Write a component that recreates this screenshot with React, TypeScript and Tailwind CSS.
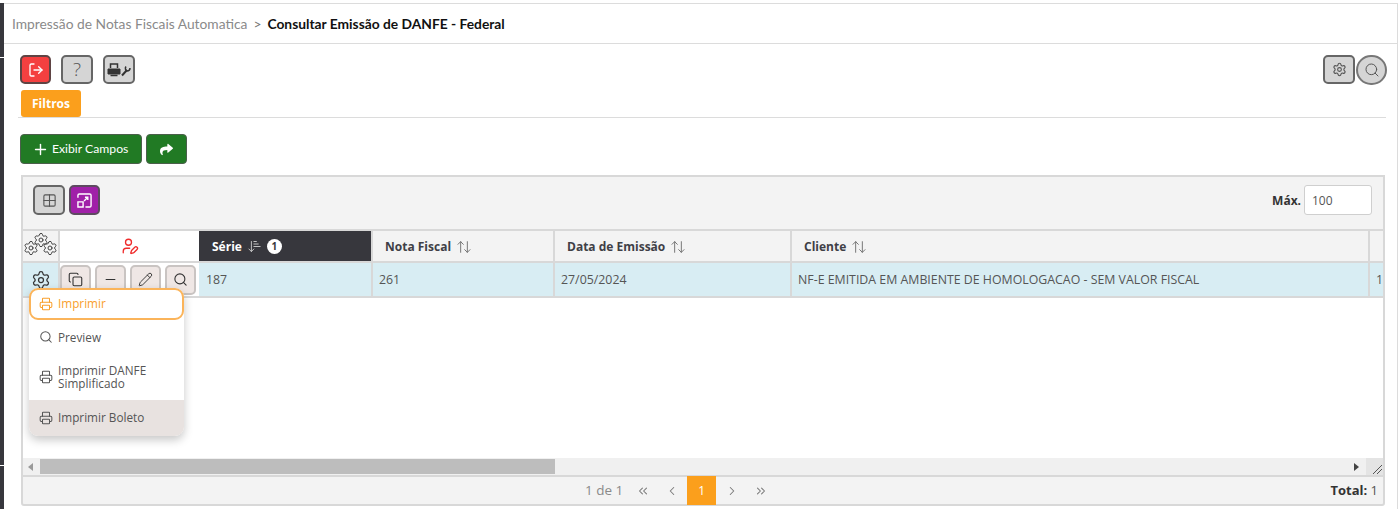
import {
  ArrowDownNarrowWide,
  ArrowUpDown,
  ChevronLeft,
  ChevronRight,
  ChevronsLeft,
  ChevronsRight,
  Copy,
  Grid2x2,
  LogOut,
  Minus,
  Pencil,
  Plus,
  Printer,
  Search,
  Settings,
  UserPen,
} from "lucide-react";
import { FaShare } from "react-icons/fa";

const columns = "grid grid-cols-[37px_139px_174px_182px_237px_578px_13px]";

function GrayButton({ className, children }: { className: string; children: React.ReactNode }) {
  return (
    <button
      type="button"
      className={`flex items-center justify-center rounded-[5px] border-2 border-[#666] bg-[#d5d5d5] text-[#555] ${className}`}
    >
      {children}
    </button>
  );
}

function HeaderCell({ label }: { label: string }) {
  return (
    <div className="flex items-center gap-[5px] border-r-2 border-[#d8d8d8] pt-[1px] pl-[12px] text-[12px] font-bold text-[#3f3f46]">
      {label}
      <ArrowUpDown className="h-4 w-4 text-[#777]" strokeWidth={1.5} />
    </div>
  );
}

function RowAction({ children }: { children: React.ReactNode }) {
  return (
    <button
      type="button"
      className="flex h-[30px] w-[31px] items-center justify-center rounded-[5px] border-2 border-[#c9c4c2] bg-[#efe7e5] text-[#333]"
    >
      {children}
    </button>
  );
}

function MenuItem({ label, icon, height }: { label: React.ReactNode; icon: React.ReactNode; height: string }) {
  return (
    <div className={`flex items-center gap-[5px] pl-[10px] text-[11.75px] leading-[13px] text-[#555] ${height}`}>
      {icon}
      <span>{label}</span>
    </div>
  );
}

export default function App() {
  return (
    <div className="flex h-[509px] w-[1399px] overflow-hidden bg-white font-['Open_Sans',sans-serif]">
      <div className="mt-[3px] flex w-[4px] flex-col">
        <div className="h-[54px] bg-[#37373d]" />
        <div className="mt-[1px] h-[407px] bg-[#37373d]" />
        <div className="mt-[1px] flex-1 bg-[#37373d]" />
      </div>
      <div className="mt-[3px] mr-[1px] flex flex-1 flex-col border-t border-r border-[#dcdcdc]">
        <header className="flex h-[40px] shrink-0 items-center gap-[6px] border-b border-[#dcdcdc] pt-[2px] pl-[8px] font-['Lato',sans-serif] text-[13.8px]">
          <span className="text-[#8a8a8a]">Impressão de Notas Fiscais Automatica</span>
          <span className="text-[#777]">&gt;</span>
          <span className="font-bold text-[#111]">Consultar Emissão de DANFE - Federal</span>
        </header>

        <div className="mt-[11px] flex pr-[10px] pl-[16px]">
          <GrayButton className="h-[29px] w-[31px] !border-[#5f4444] !bg-[#f44040] !text-white">
            <LogOut className="h-4 w-4" />
          </GrayButton>
          <GrayButton className="ml-[10px] h-[29px] w-[32px] text-[19px] font-light !text-[#555]">?</GrayButton>
          <GrayButton className="ml-[10px] h-[29px] w-[32px]">
            <svg viewBox="0 0 24 14" className="h-[14px] w-[24px] text-[#333]" fill="none" stroke="currentColor">
              <path d="M3.5 5V1h7v4" strokeWidth="1.5" />
              <path d="M1 6h12v5H1z" fill="currentColor" strokeWidth="1" />
              <path d="M3.5 12.5h7" strokeWidth="1.5" />
              <path d="M15 12.5 20 7" strokeWidth="2" />
              <path d="M19 3.5A3 3 0 0 0 20 8a3 3 0 0 0 3-3" strokeWidth="1.5" />
            </svg>
          </GrayButton>
          <GrayButton className="ml-auto h-[29px] w-[32px]">
            <Settings className="h-[15px] w-[15px]" strokeWidth={1.75} />
          </GrayButton>
          <GrayButton className="ml-[1px] h-[30px] w-[31px] !rounded-full !border-[#777]">
            <Search className="h-4 w-4" strokeWidth={1.5} />
          </GrayButton>
        </div>

        <div className="mt-[5px] mr-[11px] ml-[14px] border-b border-[#dcdcdc] pl-[3px]">
          <div className="flex h-[27px] w-[60px] items-center justify-center rounded-[3px] bg-[#fb9f1c] text-[12px] font-bold text-white">
            Filtros
          </div>
        </div>

        <div className="mt-[16px] flex gap-[4px] pl-[16px]">
          <button
            type="button"
            className="flex h-[30px] w-[122px] items-center gap-[3px] rounded-[4px] border border-[#4b5f4b] bg-[#217a24] pt-[1px] pl-[11px] font-['Lato',sans-serif] text-[12.2px] text-white"
          >
            <Plus className="h-[17px] w-[17px]" />
            Exibir Campos
          </button>
          <button
            type="button"
            className="flex h-[30px] w-[41px] items-center justify-center rounded-[4px] border border-[#4b5f4b] bg-[#217a24] text-white"
          >
            <FaShare className="h-[13px] w-[13px]" />
          </button>
        </div>

        <section className="relative mt-[11px] mr-[12px] ml-[17px] flex h-[300px] shrink-0 flex-col border-2 border-b-0 border-[#d8d8d8]">
          <div className="flex h-[52px] shrink-0 items-start bg-[#f3f3f3] pt-[8px] pr-[11px] pl-[10px]">
            <GrayButton className="h-[30px] w-[32px]">
              <Grid2x2 className="h-[15px] w-[15px]" strokeWidth={1.75} />
            </GrayButton>
            <GrayButton className="ml-[4px] h-[30px] w-[31px] !border-[#5d4a60] !bg-[#a020a8] !text-white">
              <svg viewBox="0 0 16 16" className="h-[15px] w-[15px]" fill="none" stroke="currentColor" strokeWidth="1.5">
                <path d="M1 5V2.5A1.5 1.5 0 0 1 2.5 1h11A1.5 1.5 0 0 1 15 2.5v11a1.5 1.5 0 0 1-1.5 1.5H9" />
                <path d="M1 9.5h5.5V15H1z" />
                <path d="M7.5 8.5 11.5 4.5M8.5 4.5h3v3" />
              </svg>
            </GrayButton>
            <span className="mt-[7px] ml-auto text-[12px] font-bold text-[#333]">Máx.</span>
            <input
              readOnly
              value="100"
              className="ml-[3px] h-[30px] w-[68px] rounded-[3px] border border-[#cfcfcf] bg-white pl-[7px] text-[12px] text-[#555]"
            />
          </div>

          <div className={`${columns} h-[34px] shrink-0 border-t-2 border-b-2 border-[#d8d8d8] bg-[#f3f3f3]`}>
            <div className="relative border-r-2 border-[#d8d8d8] text-[#444]">
              <Settings className="absolute top-[1px] left-[10px] h-4 w-4" strokeWidth={1.5} />
              <Settings className="absolute top-[9px] left-0 h-4 w-4" strokeWidth={1.5} />
              <Settings className="absolute top-[9px] left-[19px] h-4 w-4" strokeWidth={1.5} />
            </div>
            <div className="flex items-center justify-center bg-white">
              <UserPen className="h-[18px] w-[18px] text-[#ef2b2b]" strokeWidth={1.75} />
            </div>
            <div className="flex items-center gap-[5px] border-r-2 border-[#d8d8d8] bg-[#37373d] pt-[1px] pl-[13px] text-[12px] font-bold text-white">
              Série
              <ArrowDownNarrowWide className="h-[15px] w-[15px] text-[#ccc]" strokeWidth={1.5} />
              <span className="flex h-[15px] w-[15px] items-center justify-center rounded-full bg-white text-[10px] text-[#37373d]">
                1
              </span>
            </div>
            <HeaderCell label="Nota Fiscal" />
            <HeaderCell label="Data de Emissão" />
            <HeaderCell label="Cliente" />
            <div />
          </div>

          <div className={`${columns} h-[35px] shrink-0 border-b-2 border-[#d8d8d8] bg-[#d8edf3] text-[12.35px] text-[#555]`}>
            <div className="flex items-center justify-center border-r-2 border-[#d8d8d8] text-[#333]">
              <Settings className="h-[20px] w-[20px]" strokeWidth={1.5} />
            </div>
            <div className="flex items-center gap-[4px] bg-white [&_svg]:h-[15px] [&_svg]:w-[15px]">
              <RowAction><Copy strokeWidth={1.75} /></RowAction>
              <RowAction><Minus strokeWidth={1.75} /></RowAction>
              <RowAction><Pencil strokeWidth={1.5} /></RowAction>
              <RowAction><Search strokeWidth={1.75} /></RowAction>
            </div>
            <div className="flex items-center border-r-2 border-[#d8d8d8] pt-[2px] pl-[7px]">187</div>
            <div className="flex items-center border-r-2 border-[#d8d8d8] pt-[2px] pl-[6px]">261</div>
            <div className="flex items-center border-r-2 border-[#d8d8d8] pt-[2px] pl-[6px]">27/05/2024</div>
            <div className="flex items-center border-r-2 border-[#d8d8d8] pt-[2px] pl-[6px]">
              NF-E EMITIDA EM AMBIENTE DE HOMOLOGACAO - SEM VALOR FISCAL
            </div>
            <div className="flex items-center pt-[2px] pl-[6px]">1</div>
          </div>

          <div className="flex-1" />

          <div className="flex h-[17px] shrink-0 items-center bg-[#f0f0f0]">
            <span className="ml-[5px] h-0 w-0 border-y-[4px] border-r-[5px] border-y-transparent border-r-[#999]" />
            <div className="ml-[7px] h-[15px] w-[515px] bg-[#bdbdbd]" />
            <span className="mr-[7px] ml-auto h-0 w-0 border-y-[4px] border-l-[5px] border-y-transparent border-l-[#444]" />
            <div className="flex h-full w-[17px] items-end justify-end bg-[#e4e4e4] text-[#555]">
              <svg viewBox="0 0 12 12" className="h-3 w-3" fill="none" stroke="currentColor" strokeWidth="1">
                <path d="M2 11 11 2M6 11l5-5" />
              </svg>
            </div>
          </div>

          <div className="absolute top-[111px] left-[6px] z-10 w-[155px] rounded-[9px] bg-white shadow-[0_4px_10px_rgba(0,0,0,0.22)]">
            <div className="flex h-[32px] items-center gap-[5px] rounded-[9px] border-2 border-[#fbb45a] pl-[8px] text-[11.75px] text-[#f9a02c]">
              <Printer className="h-[14px] w-[14px]" strokeWidth={1.75} />
              Imprimir
            </div>
            <MenuItem
              height="h-[34px]"
              label="Preview"
              icon={<Search className="h-[14px] w-[14px]" strokeWidth={1.75} />}
            />
            <MenuItem
              height="h-[46px]"
              label={<>Imprimir DANFE<br />Simplificado</>}
              icon={<Printer className="h-[14px] w-[14px]" strokeWidth={1.75} />}
            />
            <div className="flex h-[36px] items-center gap-[5px] rounded-b-[9px] bg-[#e8e2e0] pl-[10px] text-[11.75px] text-[#555]">
              <Printer className="h-[14px] w-[14px]" strokeWidth={1.75} />
              Imprimir Boleto
            </div>
          </div>
        </section>

        <footer className="mr-[12px] ml-[17px] flex h-[31px] shrink-0 items-center rounded-b-[3px] border-2 border-[#d8d8d8] bg-[#f3f3f3] pr-[5px] text-[#777]">
          <div className="ml-[562px] flex items-center">
            <span className="text-[13.5px] text-[#8a8a8a]">1 de 1</span>
            <ChevronsLeft className="ml-[13px] h-3.5 w-3.5" strokeWidth={1.75} />
            <ChevronLeft className="ml-[15px] h-3.5 w-3.5" strokeWidth={1.75} />
            <span className="ml-[8px] flex h-[29px] w-[29px] items-center justify-center bg-[#fb9f1c] text-[12px] text-white">1</span>
            <ChevronRight className="ml-[9px] h-3.5 w-3.5" strokeWidth={1.75} />
            <ChevronsRight className="ml-[15px] h-3.5 w-3.5" strokeWidth={1.75} />
          </div>
          <span className="ml-auto text-[13px] font-bold text-[#333]">
            Total: <span className="font-normal text-[#555]">1</span>
          </span>
        </footer>
      </div>
    </div>
  );
}
